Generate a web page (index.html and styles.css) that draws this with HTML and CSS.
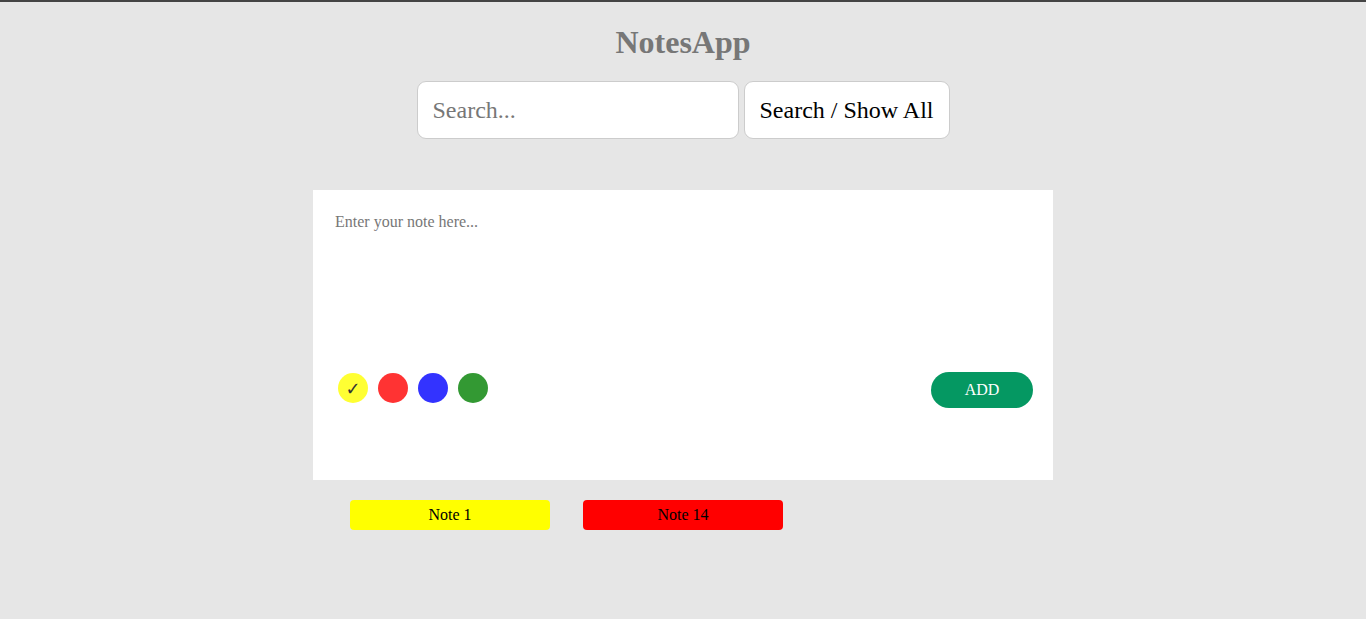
FILE: index.html
```html
<!DOCTYPE html>
<html>
<head>
<meta charset="utf-8">
<link rel="stylesheet" href="styles.css">
</head>
<body>
<h1 class="title">NotesApp</h1>
<div class="search-row">
  <input class="search-input" type="text" placeholder="Search...">
  <button class="search-btn">Search / Show All</button>
</div>
<div class="editor">
  <textarea class="note-text" placeholder="Enter your note here..."></textarea>
  <div class="editor-bar">
    <div class="colors">
      <span class="dot yellow">&#10003;</span>
      <span class="dot red"></span>
      <span class="dot blue"></span>
      <span class="dot green"></span>
    </div>
    <button class="add-btn">ADD</button>
  </div>
</div>
<div class="notes">
  <div class="note note-yellow">Note 1</div>
  <div class="note note-red">Note 14</div>
</div>
</body>
</html>
```

FILE: styles.css
```css
html, body {
  margin: 0;
  padding: 0;
}
body {
  background: #e6e6e6;
  border-top: 2px solid #444;
  font-family: "Liberation Serif", "Times New Roman", serif;
  min-height: 617px;
  box-sizing: border-box;
}
.title {
  margin: 0;
  padding-top: 22px;
  text-align: center;
  font-size: 32px;
  line-height: 37px;
  font-weight: bold;
  color: #777;
}
.search-row {
  display: flex;
  justify-content: center;
  gap: 5px;
  margin-top: 20px;
}
.search-input {
  width: 322px;
  height: 58px;
  box-sizing: border-box;
  border: 1px solid #ccc;
  border-radius: 9px;
  padding: 0 15px;
  font-family: "Liberation Serif", serif;
  font-size: 24px;
  background: #fff;
  outline: none;
}
.search-input::placeholder {
  color: #777;
}
.search-btn {
  height: 58px;
  width: 206px;
  box-sizing: border-box;
  border: 1px solid #ccc;
  border-radius: 9px;
  background: #fff;
  font-family: "Liberation Serif", serif;
  font-size: 24px;
  color: #000;
  padding: 0;
}
.editor {
  width: 740px;
  height: 290px;
  box-sizing: border-box;
  margin: 51px auto 0;
  background: #fff;
  padding: 21px 20px 0 22px;
  display: flex;
  flex-direction: column;
}
.note-text {
  border: none;
  outline: none;
  resize: none;
  height: 150px;
  padding: 0;
  font-family: "Liberation Serif", serif;
  font-size: 16px;
  line-height: 22px;
  background: transparent;
}
.note-text::placeholder {
  color: #777;
}
.editor-bar {
  display: flex;
  justify-content: space-between;
  align-items: flex-start;
  margin-top: 10px;
}
.colors {
  display: flex;
  gap: 10px;
  padding-left: 3px;
  margin-top: 2px;
}
.dot {
  width: 30px;
  height: 30px;
  border-radius: 50%;
  display: flex;
  align-items: center;
  justify-content: center;
  font-family: "DejaVu Sans", sans-serif;
  font-size: 18px;
  font-weight: bold;
  color: #333;
}
.yellow { background: #ffff33; }
.red { background: #ff3333; }
.blue { background: #3333ff; }
.green { background: #339933; }
.add-btn {
  width: 102px;
  height: 36px;
  margin-top: 1px;
  border: none;
  border-radius: 18px;
  background: #059862;
  color: #fff;
  font-family: "Liberation Serif", serif;
  font-size: 16px;
  padding: 0;
}
.notes {
  width: 740px;
  margin: 20px auto 0;
  box-sizing: border-box;
  padding-left: 37px;
  display: flex;
  gap: 33px;
}
.note {
  width: 200px;
  height: 30px;
  border-radius: 4px;
  display: flex;
  align-items: center;
  justify-content: center;
  font-size: 16px;
  color: #000;
}
.note-yellow { background: #ffff00; }
.note-red { background: #ff0000; }
```
